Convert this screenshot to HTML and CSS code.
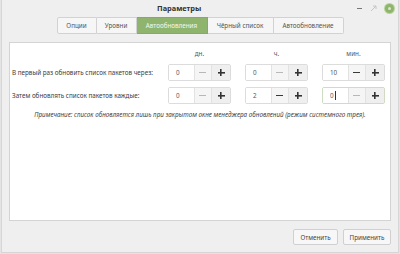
FILE: index.html
```
<!DOCTYPE html>
<html lang="ru">
<head>
    <meta charset="utf-8">
    <title>Параметры</title>
    <link rel="stylesheet" href="styles.css">
</head>
<body>
    <div class="window">
        <div class="titlebar">
            <span class="title">Параметры</span>
            <div class="controls">
                <span class="ctl-min"></span>
                <svg class="ctl-max" width="7" height="7" viewBox="0 0 7 7"><path d="M1 6 L6 1 M3 1 H6 V4" stroke="#c4c4c4" stroke-width="1" fill="none"/></svg>
                <span class="ctl-close"></span>
            </div>
        </div>

        <div class="switcher">
            <span class="tab">Опции</span>
            <span class="tab">Уровни</span>
            <span class="tab active">Автообновления</span>
            <span class="tab">Чёрный список</span>
            <span class="tab">Автообновление</span>
        </div>

        <div class="frame">
            <div class="grid">
                <span></span>
                <span class="unit">дн.</span>
                <span class="unit">ч.</span>
                <span class="unit">мин.</span>

                <span class="label">В первый раз обновить список пакетов через:</span>
                <div class="spin"><span class="entry">0</span><span class="btn minus off"></span><span class="btn plus"></span></div>
                <div class="spin"><span class="entry">0</span><span class="btn minus off"></span><span class="btn plus"></span></div>
                <div class="spin"><span class="entry">10</span><span class="btn minus"></span><span class="btn plus"></span></div>

                <span class="label">Затем обновлять список пакетов каждые:</span>
                <div class="spin"><span class="entry">0</span><span class="btn minus off"></span><span class="btn plus"></span></div>
                <div class="spin"><span class="entry">2</span><span class="btn minus"></span><span class="btn plus"></span></div>
                <div class="spin focus"><span class="entry">0<i class="caret"></i></span><span class="btn minus off"></span><span class="btn plus"></span></div>
            </div>
            <p class="note">Примечание: список обновляется лишь при закрытом окне менеджера обновлений (режим системного трея).</p>
        </div>

        <div class="actions">
            <span class="button">Отменить</span>
            <span class="button wide">Применить</span>
        </div>
    </div>
</body>
</html>
```

FILE: styles.css
```
*{margin:0; padding:0; box-sizing:border-box;}
body{
    width:400px; height:254px; overflow:hidden;
    background:#e4e4e4;
    font-family:"Noto Sans", "DejaVu Sans", sans-serif;
    font-size:6.3px; color:#3c3c3c;
}
.window{
    height:253px;
    margin:0 1px;
    background:#efefef;
    border:1px solid #d6d6d6; border-top:none;
}
.titlebar{
    height:16px;
    display:flex; align-items:center;
}
.title{
    margin-left:155px;
    font-weight:bold; font-size:7.4px; color:#333;
}
.controls{
    margin-left:auto; margin-right:4px;
    display:flex; align-items:center; gap:8px;
}
.ctl-min{width:5px; height:1px; background:#777;}
.ctl-close{
    width:9px; height:9px; border-radius:50%;
    background:#8fb46b;
    box-shadow:0 0 0 1px #b9d39e;
}
.ctl-close::after{content:""; display:block; margin:3px; width:3px; height:3px; border-radius:50%; background:#d8e8c8;}

.switcher{
    margin-top:1px; height:17px;
    display:flex; justify-content:center;
}
.tab{
    display:flex; align-items:center; justify-content:center;
    white-space:nowrap;
    background:#f6f6f6;
    border:1px solid #d2d2d2; border-left:none;
    color:#555;
}
.tab:first-child{border-left:1px solid #d2d2d2; border-radius:2px 0 0 2px; width:40px;}
.tab:nth-child(2){width:40px;}
.tab:nth-child(3){width:71px;}
.tab:nth-child(4){width:66px;}
.tab:last-child{border-radius:0 2px 2px 0; width:70px;}
.tab.active{background:#8fb46d; border-color:#86aa64; color:#f4f8ef;}

.frame{
    margin:8px 7px 0;
    height:179px;
    background:#fff;
    border:1px solid #d4d4d4;
}
.grid{
    display:grid;
    grid-template-columns:minmax(0,1fr) 63px 63px 63px;
    grid-template-rows:10px 17px 17px;
    column-gap:14px; row-gap:6px;
    padding:5px 5px 0 2px;
    align-items:center;
}
.unit{text-align:center; color:#555;}
.label{color:#3c3c3c; white-space:nowrap;}
.spin{
    display:flex; height:17px;
    border:1px solid #dcdcdc; border-radius:2px;
}
.entry{
    width:25px; padding-left:7px;
    display:flex; align-items:center;
    color:#555; background:#fff;
}
.btn{
    width:18px;
    border-left:1px solid #e2e2e2;
    background:#f5f5f5;
    display:flex; align-items:center; justify-content:center;
}
.btn.plus{width:19px; background:#efefef;}
.btn.minus::before{content:""; width:7px; height:1.4px; background:#3a3a3a;}
.btn.minus.off::before{background:#b8b8b8;}
.btn.plus::before{
    content:""; width:7px; height:7px;
    background:linear-gradient(#333,#333) center/7px 1.6px no-repeat,
               linear-gradient(#333,#333) center/1.6px 7px no-repeat;
}
.spin.focus{border-color:#cfdcc2;}
.caret{display:inline-block; width:1px; height:9px; margin-left:1px; background:#333;}

.note{
    margin-top:6px;
    text-align:center; font-style:italic; color:#444;
}

.actions{
    display:flex; justify-content:flex-end; gap:5px;
    margin:8px 7px 0 0;
}
.button{
    width:45px; height:16px;
    display:flex; align-items:center; justify-content:center;
    background:#f7f7f7;
    border:1px solid #d0d0d0; border-radius:2px;
    color:#444;
}
.button.wide{width:48px;}
```
